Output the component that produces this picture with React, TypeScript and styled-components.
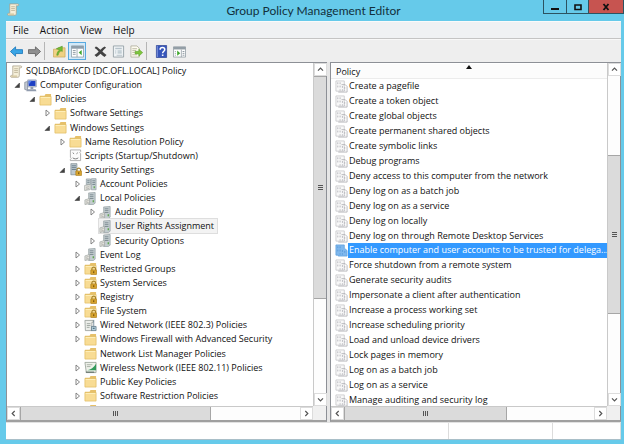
import React from "react";
import styled, { createGlobalStyle, css } from "styled-components";

const GlobalStyle = createGlobalStyle`
  * { box-sizing: border-box; }
  html, body, #root { height: 100%; margin: 0; }
  body { font: 9px/14px "Open Sans", "Noto Sans", sans-serif; color: #111; overflow: hidden; }
  button { font: inherit; color: inherit; padding: 0; margin: 0; border: 0; background: none; }
  ul { list-style: none; margin: 0; padding: 0; }
`;

const Window = styled.main`
  height: 100%;
  display: flex;
  flex-direction: column;
  padding: 0 3px 4px 6px;
  background: #66caea;
`;

const TitleBar = styled.header`
  position: relative;
  flex: none;
  height: 21px;
  display: flex;
  align-items: center;
  justify-content: center;
`;

const TitleIcon = styled.span`
  position: absolute;
  left: 1px;
  top: 3px;
  display: flex;
`;

const Title = styled.h1`
  margin: 0;
  font-family: Lato, "Open Sans", sans-serif;
  font-size: 12px;
  line-height: 18px;
  font-weight: 400;
  color: #12303c;
`;

const Captions = styled.div`
  position: absolute;
  right: -3px;
  top: 0;
  display: flex;
  height: 14px;
  border: 1px solid #2c5361;
  border-top: 0;
`;

const CaptionButton = styled.button<{ $close?: boolean }>`
  width: ${(p) => (p.$close ? 35 : 22)}px;
  display: flex;
  align-items: center;
  justify-content: center;
  background: ${(p) => (p.$close ? "#c75450" : "transparent")};
  & + & { border-left: 1px solid #2c5361; }
`;

const MenuBar = styled.nav`
  flex: none;
  height: 18px;
  display: flex;
  align-items: center;
  gap: 11px;
  padding-left: 7px;
  background: #eff1f3;
  border-bottom: 1px solid #c4c4c4;
  border-top: 1px solid #fafafa;
`;

const MenuItem = styled.button`
  font-size: 10px;
  line-height: 16px;
`;

const ToolBar = styled.div`
  flex: none;
  height: 23px;
  display: flex;
  align-items: center;
  padding-left: 1px;
  background: #eeeeee;
  border-top: 1px solid #f8f8f8;
`;

const ToolButton = styled.button<{ $active?: boolean }>`
  width: 18px;
  height: 18px;
  display: flex;
  align-items: center;
  justify-content: center;
  ${(p) =>
    p.$active &&
    css`
      background: #d3e9f8;
      border: 1px solid #58aae0;
    `}
`;

const ToolDivider = styled.span`
  width: 1px;
  height: 18px;
  margin: 0 5px 0 1px;
  background: #b5b5b5;
`;

const ToolGap = styled.span`
  width: 5px;
`;

const Panes = styled.div`
  flex: 1;
  min-height: 0;
  display: grid;
  grid-template-columns: minmax(0, 321fr) minmax(0, 291fr);
  gap: 3px;
  background: #e6e6e6;
`;

const Pane = styled.section`
  min-width: 0;
  min-height: 0;
  display: grid;
  grid-template-columns: minmax(0, 1fr) 13px;
  grid-template-rows: minmax(0, 1fr) 14px;
  background: #fff;
  border: 1px solid #8d9096;
  border-bottom: 2px solid #a0a0a0;
`;

const PaneBody = styled.div`
  min-width: 0;
  padding-top: 1px;
  overflow: hidden;
`;

const Corner = styled.span`
  background: #f0f0f0;
`;

const TreeList = styled.ul`
  height: 353px;
  display: flex;
  flex-direction: column;
`;

const TreeRow = styled.li<{ $level: number }>`
  flex: 1;
  min-height: 0;
  display: flex;
  align-items: center;
  padding-left: ${(p) => (p.$level === 0 ? 3 : p.$level * 15 - 12)}px;
`;

const Expander = styled.button`
  flex: none;
  width: 14px;
  height: 12px;
  display: flex;
  align-items: center;
  justify-content: center;
`;

const ExpanderSpace = styled.span`
  flex: none;
  width: 14px;
`;

const TreeLabel = styled.span<{ $selected?: boolean }>`
  display: flex;
  align-items: center;
  gap: 3px;
  height: 14px;
  padding-right: 3px;
  white-space: nowrap;
  ${(p) =>
    p.$selected &&
    css`
      background: #f3f3f3;
      box-shadow: 0 0 0 1px #dedede;
    `}
`;

const PolicyTable = styled.table`
  width: 100%;
  display: block;
  border-collapse: collapse;
`;

const PolicyHead = styled.thead`
  display: block;
`;

const HeadRow = styled.tr`
  display: block;
`;

const HeadCell = styled.th`
  position: relative;
  display: block;
  height: 15px;
  padding: 0 5px;
  text-align: left;
  font-weight: 400;
  line-height: 15px;
  background: #fcfcfc;
  border-bottom: 1px solid #ececec;
`;

const SortMark = styled.svg`
  position: absolute;
  left: 49%;
  top: 1px;
`;

const PolicyBody = styled.tbody`
  display: grid;
  height: 329px;
  grid-auto-rows: 1fr;
`;

const PolicyRow = styled.tr`
  display: flex;
  min-width: 0;
  min-height: 0;
`;

const PolicyCell = styled.td<{ $selected?: boolean }>`
  flex: 1;
  min-width: 0;
  display: flex;
  align-items: center;
  padding: 0 0 0 4px;
  color: ${(p) => (p.$selected ? "#fff" : "inherit")};
`;

const PolicyName = styled.span<{ $selected?: boolean }>`
  flex: ${(p) => (p.$selected ? 1 : "0 1 auto")};
  min-width: 0;
  height: 100%;
  padding-left: 1px;
  line-height: 14px;
  white-space: nowrap;
  background: ${(p) => (p.$selected ? "#3399ff" : "transparent")};
`;

const Scroll = styled.div<{ $axis: "x" | "y" }>`
  min-width: 0;
  min-height: 0;
  display: flex;
  flex-direction: ${(p) => (p.$axis === "x" ? "row" : "column")};
  background: #fdfdfd;
  border: 0 solid #c9c9c9;
  ${(p) => (p.$axis === "x" ? "border-top-width: 1px;" : "border-left-width: 1px;")}
`;

const ScrollButton = styled.button`
  flex: none;
  width: 13px;
  height: 13px;
  display: flex;
  align-items: center;
  justify-content: center;
  background: #fff;
  box-shadow: inset 0 0 0 1px #dcdcdc;
`;

const Track = styled.div<{ $grow: number }>`
  flex: ${(p) => p.$grow} 1 0;
`;

const Thumb = styled.div<{ $grow: number; $axis: "x" | "y" }>`
  flex: ${(p) => p.$grow} 1 0;
  display: flex;
  align-items: center;
  justify-content: center;
  background: #dbdbdb;
  border: 0 solid #a6a6a6;
  border-width: ${(p) => (p.$axis === "x" ? "0 1px" : "1px 0")};
`;

const StatusBar = styled.footer`
  flex: none;
  height: 18px;
  display: grid;
  grid-template-columns: minmax(0, 443fr) minmax(0, 104fr) minmax(0, 68fr);
  background: #fff;
  border-top: 1px solid #e2e2e2;
  border-bottom: 1px solid #a9bfc8;
`;

const StatusCell = styled.span`
  border-right: 1px solid #dcdcdc;
`;

type IconName =
  | "scroll" | "computer" | "folder" | "script" | "security" | "servers" | "server"
  | "lockfolder" | "wired" | "wireless" | "policy" | "policySel"
  | "back" | "forward" | "up" | "tree" | "delete" | "props" | "export" | "help" | "pane";

const Folder = () => (
  <>
    <path d="M1 3h5l1-2h6v11H1z" fill="#e6c06a" />
    <path d="M1 3.800h12V13H1z" fill="#f8dc94" stroke="#dfb95e" strokeWidth=".7" />
    <path d="M1.800 4.800h10.400" stroke="#fff0bd" />
  </>
);

const Lock = () => (
  <g transform="translate(7 5)">
    <path d="M1.500 4V2.500a2 2 0 0 1 4 0V4" fill="none" stroke="#a7842c" strokeWidth="1.200" />
    <rect x=".3" y="3.500" width="6.400" height="5" rx=".5" fill="#d9a52e" stroke="#a1761b" strokeWidth=".6" />
    <path d="M3.500 5v2" stroke="#604008" />
  </g>
);

const ServerBox = () => (
  <>
    <path d="M5 1l7-.5V12l-2 1.500H5z" fill="#c4cdd0" stroke="#8d999c" strokeWidth=".7" />
    <path d="M6.200 3h4M6.200 5h4M6.200 7h4" stroke="#6c7b81" strokeWidth=".8" />
    <path d="M10 9v2" stroke="#5aa447" strokeWidth="1.400" />
    <path d="M1 8.500l5-1.500v5.500l-5 1z" fill="#e9e9e2" stroke="#979d9b" strokeWidth=".7" />
    <path d="M2 10l3-.8M2 12l3-.8" stroke="#888" strokeWidth=".6" />
  </>
);

const drawings: Record<IconName, React.ReactNode> = {
  scroll: (
    <>
      <path d="M3 1h8.500c1.500 0 1.500 2 0 2H10v8.500c0 1-.6 1.700-1.500 1.700h-7c-1.200 0-1.200-2 0-2H3z" fill="#f5efd9" stroke="#a69d86" strokeWidth=".8" />
      <path d="M4.500 4h4M4.500 6h4M4.500 8h4" stroke="#b3a98c" strokeWidth=".8" />
      <path d="M1.500 11.200h6v2h-6z" fill="#d8cba5" />
    </>
  ),
  computer: (
    <>
      <path d="M.8 3.500l3-.8v9.500l-3-1z" fill="#c3c9d2" stroke="#76808e" strokeWidth=".7" />
      <path d="M4 1h9.200v7.500H4z" fill="#d3d8e1" stroke="#7886a4" strokeWidth=".7" />
      <path d="M5 2h7.300v5.500H5z" fill="#1c3fc4" />
      <path d="M5 2h3.400L5 6z" fill="#5d86ea" />
      <path d="M7 8.700h3v2H7zM3.500 11h9l1 2.200h-11z" fill="#919cae" />
    </>
  ),
  folder: <Folder />,
  script: (
    <>
      <path d="M1.500 1h11v2l-1 1 1 1v7.500h-11V11l1-1-1-1z" fill="#fbfbfb" stroke="#999" strokeWidth=".8" />
      <path d="M4 4l1.500 1.200M9.500 4L8 5.200M4 9.500c1.500 1.500 4.500 1.500 6 0" fill="none" stroke="#777" />
    </>
  ),
  security: (
    <>
      <path d="M2 .7h6.500v12H2z" fill="#bdc8ce" stroke="#77858b" strokeWidth=".7" />
      <path d="M3 3h4.500M3 5h4.500M3 7h4.500" stroke="#546a79" strokeWidth=".8" />
      <Lock />
    </>
  ),
  servers: (
    <>
      <path d="M2.500 1h4.500v6H2.500zM8 .7h5v12H8z" fill="#c6d0d3" stroke="#88959a" strokeWidth=".7" />
      <path d="M3.500 3h2.500M3.500 5h2.500M9 3h3M9 5h3M9 7h3" stroke="#64757e" strokeWidth=".8" />
      <path d="M.7 8l6-1v5.500l-6 1z" fill="#e9e9e2" stroke="#979d9b" strokeWidth=".7" />
      <path d="M2 10l3.500-.6M2 12l3.500-.6" stroke="#888" strokeWidth=".6" />
      <path d="M11 9v2" stroke="#5aa447" strokeWidth="1.300" />
    </>
  ),
  server: <ServerBox />,
  lockfolder: (
    <>
      <Folder />
      <Lock />
    </>
  ),
  wired: (
    <>
      <path d="M1 1.500h9v2H8.500v9h-7z" fill="#eceeea" stroke="#8f9690" strokeWidth=".8" />
      <path d="M3 5h4M3 7h4M3 9h3" stroke="#8b948e" strokeWidth=".8" />
      <path d="M10.500 1v7M8 8h5v4.500H8z" fill="#b7d0dd" stroke="#587382" strokeWidth=".8" />
      <path d="M9.500 10h2" stroke="#2f5363" />
    </>
  ),
  wireless: (
    <>
      <path d="M1 1.500h12v11H2.500z" fill="#eef1ea" stroke="#8e978c" strokeWidth=".8" />
      <path d="M3 4h6M3 6h4" stroke="#98a094" strokeWidth=".8" />
      <path d="M13 3v7H3.500c4-.5 7-3 9.500-7z" fill="#329a5b" />
      <path d="M2 12h9" stroke="#5b6b62" strokeWidth="1.200" />
    </>
  ),
  policy: (
    <>
      <path d="M1 1h9v11H1z" fill="#f8f8f8" stroke="#c2c2c6" strokeWidth=".8" />
      <path d="M7 5h4l2 2v6H3.500" fill="none" stroke="#b0b0b5" strokeWidth=".9" />
      <path d="M3 2.500v2M5.500 2.500v2M3 6v2M5.500 6v2M8 6.500v2M10.500 7.500v2M5.500 10v1.500M8 10v1.500M10.500 10.500v1" stroke="#b0b0b6" strokeWidth=".9" />
    </>
  ),
  policySel: (
    <>
      <path d="M1 1h9v3.500l3 2.500v6H3.500V12H1z" fill="#7fb8ee" stroke="#5c9edd" strokeWidth=".8" />
      <path d="M3 2.500v2M5.500 2.500v2M3 6v2M5.500 6v2M8 6.500v2M10.500 7.500v2M5.500 10v1.500M8 10v1.500" stroke="#5596d6" strokeWidth=".9" />
    </>
  ),
  back: <path d="M.5 7L6 2v3h7.500v4.200H6v3z" fill="#39a5e6" stroke="#1c78bb" strokeWidth=".9" />,
  forward: <path d="M13.500 7L8 2v3H.5v4.200H8v3z" fill="#909090" stroke="#606060" strokeWidth=".9" />,
  up: (
    <>
      <path d="M.5 4.500h4l1-1.500H13v10H.5z" fill="#f0d184" stroke="#c7a453" strokeWidth=".7" />
      <path d="M4 11c.3-3 1.500-4.500 3-5.500L3.500 4 10 1.200 10 7 8.500 6.200C7 7.500 6 8.500 5.500 11z" fill="#73bd35" stroke="#4c8c21" strokeWidth=".5" />
    </>
  ),
  tree: (
    <>
      <path d="M.5 1h13v12H.5z" fill="#fff" stroke="#8797a3" strokeWidth=".8" />
      <path d="M.5 1h13v3H.5z" fill="#8e9eaa" />
      <path d="M2 6h3M2 8h3M2 10h3" stroke="#8b98a2" />
      <path d="M6.500 4v9" stroke="#8797a3" strokeWidth=".8" />
      <path d="M11.500 5.500v5.500L8.300 8.200z" fill="#3ea62c" />
    </>
  ),
  delete: <path d="M2 1.500c2 .7 3.500 2.200 5 3.700 1.500-1.700 3-3 4.500-3.700l1.500 1.500C11.500 4 10 5.500 9 7c1.400 1.400 2.700 2.700 4.500 3.700l-2.200 2.300C9.800 12 8.300 10.700 7 9.300c-1.400 1.400-2.600 2.700-4.200 3.700L.5 10.700c1.600-.8 3.300-2.200 4.500-3.700C3.800 5.600 2.400 4.400.7 3.300z" fill="#434343" />,
  props: (
    <>
      <path d="M1.500 1h11v12h-11z" fill="#eff3f5" stroke="#8f9aa1" strokeWidth=".9" />
      <path d="M3.500 3h7v1.500h-7z" fill="#b6c2ca" />
      <path d="M3.500 6.500h1M6 6.500h4.500M3.500 8.500h1M6 8.500h4.500" stroke="#9fb0ba" />
      <path d="M5 10.500h6V12H5z" fill="#c5ced4" />
    </>
  ),
  export: (
    <>
      <path d="M1 1h6.500L10 3.500V13H1z" fill="#fdfbf0" stroke="#aaa793" strokeWidth=".8" />
      <path d="M2.500 4h5M2.500 6h4M2.500 8h4M2.500 10.500h5" stroke="#aaa68d" strokeWidth=".8" />
      <path d="M5.500 6.800h4V4.500L13.700 8.200 9.500 12V9.700h-4z" fill="#7fc43e" stroke="#559c25" strokeWidth=".5" />
    </>
  ),
  help: (
    <>
      <path d="M1.500.5h11v13h-11z" fill="#3655bb" stroke="#243b8b" strokeWidth=".7" />
      <path d="M2.500 1v12" stroke="#8498dd" />
      <path d="M5.500 5c0-3 5-3 5 0 0 1.800-2.300 1.700-2.300 4" fill="none" stroke="#fff" strokeWidth="1.600" />
      <path d="M7.400 10.200h1.700v1.600H7.400z" fill="#fff" />
    </>
  ),
  pane: (
    <>
      <path d="M.5 2h13v11H.5z" fill="#fff" stroke="#88949d" strokeWidth=".8" />
      <path d="M.5 2h13v2.800H.5z" fill="#939ea6" />
      <path d="M9 5v8" stroke="#8c979f" strokeWidth=".8" />
      <path d="M10.300 7h2M10.300 9h2M10.300 11h2M2 7h1M2 9h1M2 11h1" stroke="#87939b" />
      <path d="M4.500 6v5.500L7.800 8.800z" fill="#3ea62c" />
    </>
  ),
};

const IconSvg = styled.svg`
  flex: none;
  display: block;
`;

const Icon = ({ name, size = 13 }: { name: IconName; size?: number }) => (
  <IconSvg width={size} height={size} viewBox="0 0 14 14" aria-hidden="true">
    {drawings[name]}
  </IconSvg>
);

const turns = { up: 0, right: 90, down: 180, left: 270 };

const Chevron = ({ dir }: { dir: keyof typeof turns }) => (
  <svg width="7" height="7" viewBox="0 0 7 7" aria-hidden="true">
    <path d="M1 4.700L3.500 2.200 6 4.700" fill="none" stroke="#555" strokeWidth="1.200" transform={`rotate(${turns[dir]} 3.5 3.5)`} />
  </svg>
);

const Grip = ({ axis }: { axis: "x" | "y" }) => (
  <svg width="7" height="7" viewBox="0 0 7 7" aria-hidden="true">
    <path d={axis === "x" ? "M1.500 1v5M3.500 1v5M5.500 1v5" : "M1 1.500h5M1 3.500h5M1 5.500h5"} stroke="#555" />
  </svg>
);

const ScrollBar = ({ axis, parts }: { axis: "x" | "y"; parts: [number, number, number] }) => (
  <Scroll $axis={axis}>
    <ScrollButton aria-label={axis === "x" ? "Scroll left" : "Scroll up"}>
      <Chevron dir={axis === "x" ? "left" : "up"} />
    </ScrollButton>
    <Track $grow={parts[0]} />
    <Thumb $axis={axis} $grow={parts[1]}>
      <Grip axis={axis} />
    </Thumb>
    <Track $grow={parts[2]} />
    <ScrollButton aria-label={axis === "x" ? "Scroll right" : "Scroll down"}>
      <Chevron dir={axis === "x" ? "right" : "down"} />
    </ScrollButton>
  </Scroll>
);

type Node = { level: number; icon: IconName; label: string; state?: "open" | "closed"; selected?: boolean };

const tree: Node[] = [
  { level: 0, icon: "scroll", label: "SQLDBAforKCD [DC.OFL.LOCAL] Policy" },
  { level: 1, icon: "computer", label: "Computer Configuration", state: "open" },
  { level: 2, icon: "folder", label: "Policies", state: "open" },
  { level: 3, icon: "folder", label: "Software Settings", state: "closed" },
  { level: 3, icon: "folder", label: "Windows Settings", state: "open" },
  { level: 4, icon: "folder", label: "Name Resolution Policy", state: "closed" },
  { level: 4, icon: "script", label: "Scripts (Startup/Shutdown)" },
  { level: 4, icon: "security", label: "Security Settings", state: "open" },
  { level: 5, icon: "servers", label: "Account Policies", state: "closed" },
  { level: 5, icon: "server", label: "Local Policies", state: "open" },
  { level: 6, icon: "server", label: "Audit Policy", state: "closed" },
  { level: 6, icon: "server", label: "User Rights Assignment", selected: true },
  { level: 6, icon: "server", label: "Security Options", state: "closed" },
  { level: 5, icon: "server", label: "Event Log", state: "closed" },
  { level: 5, icon: "lockfolder", label: "Restricted Groups", state: "closed" },
  { level: 5, icon: "lockfolder", label: "System Services", state: "closed" },
  { level: 5, icon: "lockfolder", label: "Registry", state: "closed" },
  { level: 5, icon: "lockfolder", label: "File System", state: "closed" },
  { level: 5, icon: "wired", label: "Wired Network (IEEE 802.3) Policies", state: "closed" },
  { level: 5, icon: "folder", label: "Windows Firewall with Advanced Security", state: "closed" },
  { level: 5, icon: "folder", label: "Network List Manager Policies" },
  { level: 5, icon: "wireless", label: "Wireless Network (IEEE 802.11) Policies", state: "closed" },
  { level: 5, icon: "folder", label: "Public Key Policies", state: "closed" },
  { level: 5, icon: "folder", label: "Software Restriction Policies", state: "closed" },
  { level: 5, icon: "folder", label: "Network Access Protection", state: "closed" },
];

const policies = [
  "Create a pagefile",
  "Create a token object",
  "Create global objects",
  "Create permanent shared objects",
  "Create symbolic links",
  "Debug programs",
  "Deny access to this computer from the network",
  "Deny log on as a batch job",
  "Deny log on as a service",
  "Deny log on locally",
  "Deny log on through Remote Desktop Services",
  "Enable computer and user accounts to be trusted for delega...",
  "Force shutdown from a remote system",
  "Generate security audits",
  "Impersonate a client after authentication",
  "Increase a process working set",
  "Increase scheduling priority",
  "Load and unload device drivers",
  "Lock pages in memory",
  "Log on as a batch job",
  "Log on as a service",
  "Manage auditing and security log",
];

const selectedPolicy = 11;

const Tool = ({ icon, label, active }: { icon: IconName; label: string; active?: boolean }) => (
  <ToolButton aria-label={label} aria-pressed={active} $active={active}>
    <Icon name={icon} />
  </ToolButton>
);

export default function App() {
  return (
    <>
      <GlobalStyle />
      <Window>
        <TitleBar>
          <TitleIcon><Icon name="scroll" /></TitleIcon>
          <Title>Group Policy Management Editor</Title>
          <Captions>
            <CaptionButton aria-label="Minimize">
              <svg width="8" height="8" viewBox="0 0 8 8"><path d="M0 6h8" stroke="#111" strokeWidth="2" /></svg>
            </CaptionButton>
            <CaptionButton aria-label="Maximize">
              <svg width="8" height="8" viewBox="0 0 8 8"><path d="M1 2h6v4.500H1z" fill="none" stroke="#111" strokeWidth="1.600" /></svg>
            </CaptionButton>
            <CaptionButton aria-label="Close" $close>
              <svg width="8" height="8" viewBox="0 0 8 8"><path d="M1.500 1l5 6M6.500 1l-5 6" stroke="#111" strokeWidth="1.800" /></svg>
            </CaptionButton>
          </Captions>
        </TitleBar>

        <MenuBar aria-label="Main menu">
          {["File", "Action", "View", "Help"].map((m) => (
            <MenuItem key={m}>{m}</MenuItem>
          ))}
        </MenuBar>

        <ToolBar role="toolbar" aria-label="Tools">
          <Tool icon="back" label="Back" />
          <Tool icon="forward" label="Forward" />
          <ToolDivider />
          <Tool icon="up" label="Up one level" />
          <Tool icon="tree" label="Show console tree" active />
          <ToolGap />
          <Tool icon="delete" label="Delete" />
          <Tool icon="props" label="Properties" />
          <Tool icon="export" label="Export list" />
          <ToolDivider />
          <Tool icon="help" label="Help topics" />
          <Tool icon="pane" label="Show action pane" />
        </ToolBar>

        <Panes>
          <Pane aria-label="Console tree">
            <PaneBody>
              <TreeList role="tree">
                {tree.map((n) => (
                  <TreeRow
                    key={n.label}
                    $level={n.level}
                    role="treeitem"
                    aria-level={n.level + 1}
                    aria-selected={!!n.selected}
                    aria-expanded={n.state ? n.state === "open" : undefined}
                  >
                    {n.level > 0 &&
                      (n.state ? (
                        <Expander aria-label={`${n.state === "open" ? "Collapse" : "Expand"} ${n.label}`}>
                          <svg width="7" height="8" viewBox="0 0 7 8">
                            {n.state === "open" ? (
                              <path d="M5.500 2v4.500H1z" fill="#404040" stroke="#404040" strokeWidth=".6" />
                            ) : (
                              <path d="M2 1l3.500 3L2 7z" fill="#fff" stroke="#777" strokeWidth=".9" />
                            )}
                          </svg>
                        </Expander>
                      ) : (
                        <ExpanderSpace />
                      ))}
                    <TreeLabel $selected={n.selected}>
                      <Icon name={n.icon} />
                      {n.label}
                    </TreeLabel>
                  </TreeRow>
                ))}
              </TreeList>
            </PaneBody>
            <ScrollBar axis="y" parts={[0, 222, 95]} />
            <ScrollBar axis="x" parts={[0, 190, 89]} />
            <Corner />
          </Pane>

          <Pane aria-label="Policies">
            <PaneBody>
              <PolicyTable>
                <PolicyHead>
                  <HeadRow>
                    <HeadCell scope="col" aria-sort="ascending">
                      Policy
                      <SortMark width="6" height="4" viewBox="0 0 6 4" aria-hidden="true">
                        <path d="M0 4l3-4 3 4z" fill="#111" />
                      </SortMark>
                    </HeadCell>
                  </HeadRow>
                </PolicyHead>
                <PolicyBody>
                  {policies.map((p, i) => (
                    <PolicyRow key={p} aria-selected={i === selectedPolicy}>
                      <PolicyCell $selected={i === selectedPolicy}>
                        <Icon name={i === selectedPolicy ? "policySel" : "policy"} />
                        <PolicyName $selected={i === selectedPolicy}>{p}</PolicyName>
                      </PolicyCell>
                    </PolicyRow>
                  ))}
                </PolicyBody>
              </PolicyTable>
            </PaneBody>
            <ScrollBar axis="y" parts={[79, 158, 80]} />
            <ScrollBar axis="x" parts={[0, 162, 88]} />
            <Corner />
          </Pane>
        </Panes>

        <StatusBar>
          <StatusCell />
          <StatusCell />
          <StatusCell />
        </StatusBar>
      </Window>
    </>
  );
}
